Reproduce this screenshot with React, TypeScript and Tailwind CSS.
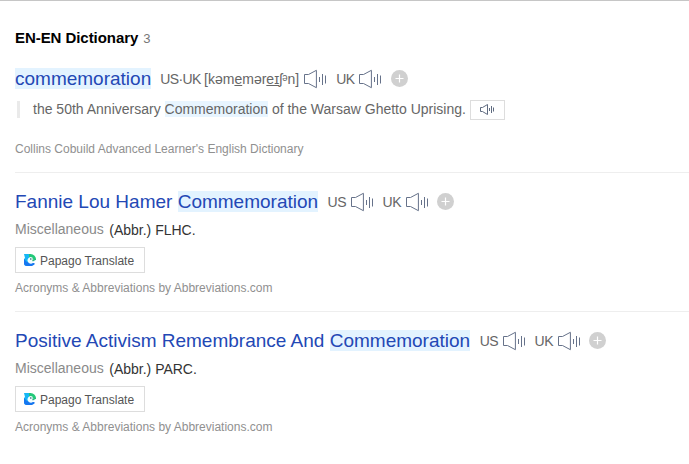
import type { ReactNode } from "react";

function Speaker() {
  return (
    <svg className="ml-[4.5px] h-5 w-[23px] shrink-0" viewBox="0 0 23 20" fill="none" stroke="#66728a" strokeWidth="1">
      <path d="M4.5 5.5h-4v9h4l7.9 4.2V1.3L4.5 5.5" />
      <path d="M15.5 8v5M18.5 5v11M21.5 6.5v8" />
    </svg>
  );
}

function Mark({ children }: { children: ReactNode }) {
  return <span className="inline-block h-[21px] bg-[#e3f3ff] leading-[21px]">{children}</span>;
}

function AddButton() {
  return (
    <svg className="-mt-px ml-2 h-[17px] w-[17px] shrink-0" viewBox="0 0 17 17">
      <circle cx="8.5" cy="8.5" r="8.5" fill="#d0d0d0" />
      <path d="M4.5 8.5h8M8.5 4.5v8" stroke="#fff" strokeWidth="1.2" />
    </svg>
  );
}

function Label({ children }: { children: ReactNode }) {
  return <span className="text-sm leading-5 tracking-[-0.5px] text-[#666]">{children}</span>;
}

function PapagoIcon() {
  return (
    <svg className="h-3 w-3" viewBox="0 0 12 12">
      <path d="M0 0h6.5v12H3a3 3 0 0 1-3-3V5l1-1z" fill="#16b6f5" />
      <path d="M0 5l3 3 3 1h4.5v1.5L8 12H3a3 3 0 0 1-3-3z" fill="#1676f0" />
      <path d="M5 0h1.5A5.6 5.6 0 0 1 12 6H8L5 3z" fill="#22c878" />
      <path d="M8.4 3.6a3.2 3.2 0 1 0 .8 4.9L12 6.8 8.8 5.6z" fill="#f2fdff" />
      <path d="M8 5.8h4L8.8 7.4z" fill="#2cb080" />
      <circle cx="6.8" cy="5" r=".8" fill="#20536b" />
    </svg>
  );
}

function AbbreviationEntry({ name, abbr, last }: { name: string; abbr: string; last?: boolean }) {
  return (
    <section className={last ? "ml-[15px] h-[139px] pt-[18px]" : "ml-[15px] h-[139px] border-b border-[#eee] pt-[18px]"}>
      <div className="flex h-[21px] items-center">
        <h3 className="whitespace-pre text-[19px] leading-[21px] text-[#2348b5]">
          {name} <Mark>Commemoration</Mark>
        </h3>
        <span className="w-[9.5px]" />
        <Label>US</Label>
        <Speaker />
        <span className="w-[9px]" />
        <Label>UK</Label>
        <Speaker />
        <AddButton />
      </div>
      <p className="mt-[8px] flex h-5 text-sm leading-5">
        <span className="-mt-px text-[#8a8a8a]">Miscellaneous</span>
        <span className="ml-[5.5px] text-[#333]">(Abbr.) {abbr}</span>
      </p>
      <button className="mt-[7px] flex h-[26px] w-[130px] items-center gap-1 border border-[#ddd] pl-2 text-xs text-[#555]">
        <PapagoIcon />
        <span className="pt-0.5">Papago Translate</span>
      </button>
      <p className="mt-[7px] text-xs leading-4 text-[#909090]">Acronyms &amp; Abbreviations by Abbreviations.com</p>
    </section>
  );
}

export default function App() {
  return (
    <main className="h-[464px] w-[689px] overflow-hidden border-t border-[#c6c6c6] bg-white font-['Liberation_Sans',Arial,sans-serif]">
      <h2 className="ml-[15px] mt-7 flex h-[18px] items-center text-[15px] font-bold leading-[18px] tracking-[-0.06px] text-black">
        EN-EN Dictionary<span className="ml-[5px] pt-px text-[13px] font-normal text-[#777]">3</span>
      </h2>
      <section className="ml-[15px] h-[126px] border-b border-[#eee] pt-[21px]">
        <div className="flex h-[21px] items-center">
          <h3 className="text-[19px] leading-[21px] text-[#2348b5]">
            <Mark>commemoration</Mark>
          </h3>
          <span className="w-[9px]" />
          <span className="whitespace-pre text-sm leading-5 text-[#666]">
            <span className="tracking-[-0.6px]">US·UK </span>[kəm<u>e</u>mər<u>eɪ</u>ʃᵊn]
          </span>
          <Speaker />
          <span className="w-[9.5px]" />
          <Label>UK</Label>
          <Speaker />
          <span className="w-px" />
          <AddButton />
        </div>
        <div className="mt-[10px] flex h-[21px] items-center">
          <span className="ml-[2px] h-[17px] w-[3px] bg-[#eaeaea]" />
          <p className="ml-[13px] whitespace-nowrap text-sm leading-[17px] text-[#666]">
            the 50th Anniversary <span className="bg-[#e8f5ff]">Commemoration</span> of the Warsaw Ghetto Uprising.
          </p>
          <button className="ml-1 flex h-5 w-[35px] items-center justify-center border border-[#ddd]">
            <svg className="h-[11px] w-[15px]" viewBox="0 0 15 11" fill="none" stroke="#5f6b80">
              <path d="M.5 3.5v4h2l5 3V.5l-5 3z" />
              <path d="M9.5 4v3M11.5 2v7M13.5 3.5v4" />
            </svg>
          </button>
        </div>
        <p className="mt-[21px] text-xs leading-4 text-[#909090]">Collins Cobuild Advanced Learner's English Dictionary</p>
      </section>
      <AbbreviationEntry name="Fannie Lou Hamer" abbr="FLHC." />
      <AbbreviationEntry name="Positive Activism Remembrance And" abbr="PARC." last />
    </main>
  );
}
